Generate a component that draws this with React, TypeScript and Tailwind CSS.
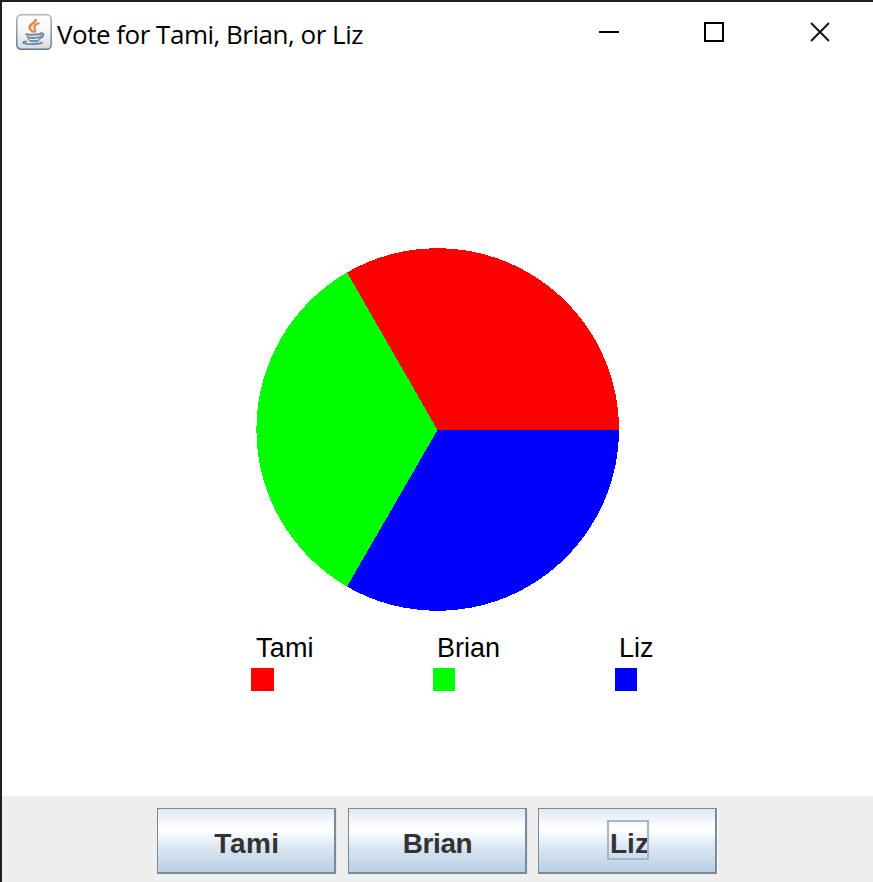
const legend = [
  { name: "Tami", gap: "pl-[5px] tracking-[0.2px]", swatch: "w-[23px] bg-[#ff0000]" },
  { name: "Brian", gap: "pl-[4px]", swatch: "w-[22px] bg-[#00ff00]" },
  { name: "Liz", gap: "pl-[4px]", swatch: "w-[22px] bg-[#0000ff]" },
];

const buttonBase =
  "flex h-[66px] items-center justify-center border border-r-2 border-b-2 border-[#7a8a99] bg-[linear-gradient(180deg,#dde8f3_0%,#ffffff_30%,#ffffff_34%,#dbe7f2_60%,#b8cfe5_100%)] text-[28px] leading-8 font-bold text-[#333333]";

function JavaIcon() {
  return (
    <svg width="36" height="36" viewBox="0 0 36 36" fill="none">
      <defs>
        <linearGradient id="tile" x1="0" y1="0" x2="0" y2="1">
          <stop offset="0" stopColor="#ffffff" />
          <stop offset="0.5" stopColor="#f4f6f8" />
          <stop offset="1" stopColor="#d4dce4" />
        </linearGradient>
        <linearGradient id="edge" x1="0" y1="0" x2="0" y2="1">
          <stop offset="0" stopColor="#a5b8c8" />
          <stop offset="1" stopColor="#64788b" />
        </linearGradient>
      </defs>
      <rect x="0.8" y="0.8" width="34.4" height="34.4" rx="4.5" fill="url(#tile)" stroke="url(#edge)" strokeWidth="1.5" />
      <path d="M19.500 5c1.500 3.500-6 5-6 8.300 0 2 2.500 3.200 3.500 5.200" stroke="#e68443" strokeWidth="2.500" />
      <path d="M23.500 9c-3 .8-5.800 2.700-5.200 4.500.5 1.500 1.700 2.500 0 5" stroke="#e68443" strokeWidth="2.200" />
      <path d="M9.500 19.700c1.500 1.500 14.500 1.400 16.500-.4" stroke="#718da7" strokeWidth="2" />
      <path d="M11 21c.5 3 1.500 4.800 3 5.800h8c1.500-1 2.500-3 3-5.800" stroke="#8aa2b8" strokeWidth="1.500" />
      <path d="M12 23.200c2 1 9.500 1 12 0M14 26.500c2 1 6.500 1 8.500 0" stroke="#718da7" strokeWidth="1.900" />
      <path d="M24.500 19.400c4.500-1.200 3.500 4-1 4.800" stroke="#718da7" strokeWidth="1.800" />
      <path d="M11 27.500c-5 .4-5 1.800-1 2.300 5 .7 14 .4 16.500-1.600" stroke="#718da7" strokeWidth="1.800" />
    </svg>
  );
}

export default function App() {
  return (
    <div className="flex h-[882px] w-[873px] flex-col overflow-hidden border-t-2 border-l-2 border-[#231f20] bg-white font-['Liberation_Sans',Arial,sans-serif] text-black">
      <header className="flex h-[60px] shrink-0 items-center pl-[14px]">
        <JavaIcon />
        <h1 className="ml-[5px] w-[542px] pt-[3px] font-['Open_Sans','Noto_Sans',sans-serif] text-[26px] leading-8 font-normal tracking-[-0.49px] whitespace-nowrap">
          Vote for Tami, Brian, or Liz
        </h1>
        <svg width="20" height="20" shapeRendering="crispEdges" aria-label="Minimize">
          <path d="M0 10h20" stroke="#000" strokeWidth="2" />
        </svg>
        <svg className="ml-[85px]" width="20" height="20" shapeRendering="crispEdges" aria-label="Maximize">
          <rect x="1" y="1" width="18" height="18" fill="none" stroke="#000" strokeWidth="2" />
        </svg>
        <svg className="ml-[86px]" width="20" height="20" aria-label="Close">
          <path d="M1 1l18 18M19 1L1 19" stroke="#111" strokeWidth="1.900" />
        </svg>
      </header>

      <main className="h-[734px] shrink-0 pt-[186px]">
        <svg className="ml-[254px]" width="363" height="363" shapeRendering="crispEdges">
          <path d="M181.500 182L91 24.400A181.500 181.500 0 0 0 91 338.600Z" fill="#00ff00" />
          <path d="M181.500 182H363A181.500 181.500 0 0 0 91 24.400Z" fill="#ff0000" />
          <path d="M181.500 182H363A181.500 181.500 0 0 1 91 338.600Z" fill="#0000ff" />
        </svg>
        <div className="ml-[249px] flex pt-[20px]">
          {legend.map((item) => (
            <div key={item.name} className="w-[182px]">
              <div className={"h-[37px] text-[27px] leading-[34px] " + item.gap}>{item.name}</div>
              <div className={"h-[23px] " + item.swatch} />
            </div>
          ))}
        </div>
      </main>

      <footer className="flex flex-1 items-start bg-[#eeeeee] pt-[12px] pl-[155px]">
        <button className={buttonBase + " w-[179px] shadow-[1px_0_0_#dbe6f0]"}>
          <span className="pt-[7px] pl-[2px] tracking-[0.5px]">Tami</span>
        </button>
        <button className={buttonBase + " ml-[12px] w-[179px] shadow-[1px_0_0_#dbe6f0]"}>
          <span className="pt-[7px] pl-px tracking-[-0.4px]">Brian</span>
        </button>
        <button className={buttonBase + " ml-[11px] w-[179px] shadow-[1px_0_0_#ffffff]"}>
          <span className="-mt-[1px] ml-[2px] h-[40px] w-[42px] overflow-hidden border-2 border-[#a3b8cc] pt-[6px] pl-[1px] text-left">Liz</span>
        </button>
      </footer>
    </div>
  );
}
